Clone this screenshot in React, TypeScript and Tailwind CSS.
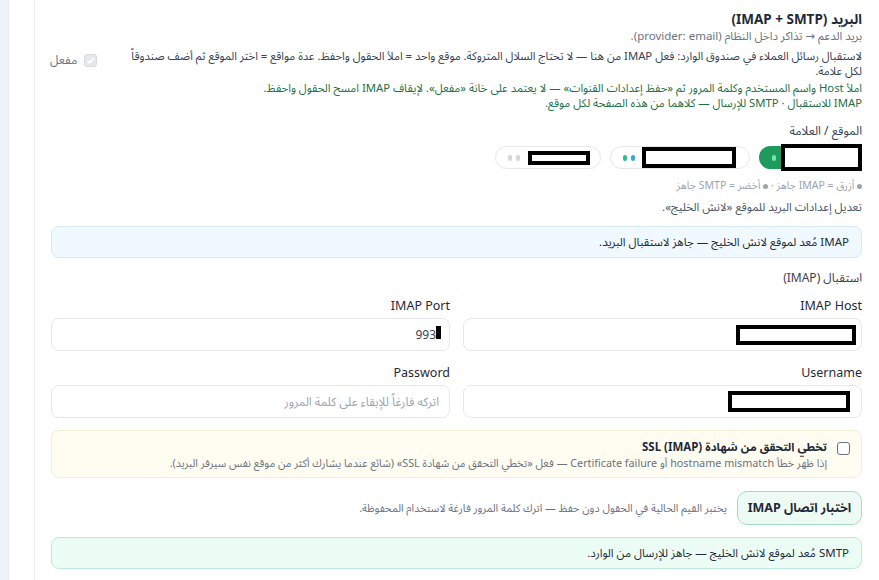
import React from "react";

const font = {
  fontFamily: '"Segoe UI", "Noto Sans", "Noto Sans Arabic", "DejaVu Sans", sans-serif',
};

function Redacted({ w, h, b = 4 }: { w: number; h: number; b?: number }) {
  return (
    <span
      className="inline-block bg-white border-black shrink-0"
      style={{ width: w, height: h, borderWidth: b }}
    />
  );
}

function Field({
  label,
  children,
  pad = "px-[10px]",
}: {
  label: string;
  children: React.ReactNode;
  pad?: string;
}) {
  return (
    <div className="flex-1 min-w-0">
      <div className="text-[12.5px] leading-[16px] text-[#1f2937]">{label}</div>
      <div className={`mt-[4px] h-[33px] rounded-lg border border-[#e5e7eb] bg-white flex items-center ${pad}`}>
        {children}
      </div>
    </div>
  );
}

function Dot({ c }: { c: string }) {
  return <span className={`inline-block w-[5px] h-[5px] rounded-full align-middle ${c}`} />;
}

export default function App() {
  return (
    <div dir="rtl" style={font} className="min-h-[580px] bg-[#eef2f9] pl-2">
      <div className="min-h-[580px] bg-white pl-[25px] border-l border-[#e4e8ef]">
        <div className="min-h-[580px] border-l border-[#ededed] pl-4 pr-[17px] pt-[10px]">
          {/* header */}
          <div className="flex items-center gap-4">
            <div className="flex-1 min-w-0">
              <div className="text-[13.5px] leading-[19px] font-bold text-[#1f2937]">البريد (IMAP + SMTP)</div>
              <div className="text-[11.5px] leading-[14px] text-[#6b7280]">
                بريد الدعم → تذاكر داخل النظام (provider: email).
              </div>
              <p className="mt-[5px] text-[11.3px] leading-[15px] text-[#374151]">
                لاستقبال رسائل العملاء في صندوق الوارد: فعل IMAP من هنا — لا تحتاج السلال المتروكة. موقع واحد = املأ الحقول واحفظ. عدة مواقع = اختر الموقع ثم أضف صندوقاً لكل علامة.
              </p>
              <p className="mt-[2px] text-[11.3px] leading-[15px] text-[#1d7048]">
                املأ Host واسم المستخدم وكلمة المرور ثم «حفظ إعدادات القنوات» — لا يعتمد على خانة «مفعل». لإيقاف IMAP امسح الحقول واحفظ.
                <br />
                IMAP للاستقبال · SMTP للإرسال — كلاهما من هذه الصفحة لكل موقع.
              </p>
            </div>
            <label className="flex items-center gap-[7px] shrink-0 text-[12px] text-[#6b7280] ml-[-1px]">
              <span className="w-[13px] h-[13px] rounded-[3px] bg-[#e5e7eb] border border-[#d8dbe0] flex items-center justify-center">
                <svg width="9" height="9" viewBox="0 0 10 10">
                  <path d="M1.5 5.2 L4 7.6 L8.6 2.4" fill="none" stroke="#ffffff" strokeWidth="1.6" />
                </svg>
              </span>
              مفعل
            </label>
          </div>

          {/* site / brand */}
          <div className="mt-[13px] text-[12px] leading-[16px] text-[#374151]">الموقع / العلامة</div>
          <div className="mt-[7px] flex items-center gap-[9px]">
            <div className="h-[23px] w-[103px] rounded-full bg-[#1e9a5d] flex items-center gap-[5px] pl-[13px]">
              <Redacted w={81} h={27} />
              <span className="w-[6px] h-[6px] rounded-full bg-[#6ee7b7]" />
            </div>
            <div className="h-[23px] w-[140px] rounded-full border border-[#e5e7eb] bg-white flex items-center gap-[4px] pr-[13px] pl-[12px]">
              <Redacted w={94} h={21} />
              <span className="mr-[3px] w-[6px] h-[6px] rounded-full bg-[#38a3e8]" />
              <span className="w-[6px] h-[6px] rounded-full bg-[#22c38e]" />
            </div>
            <div className="h-[23px] w-[106px] rounded-full border border-[#e5e7eb] bg-white flex items-center gap-[4px] pr-[10px] pl-[12px]">
              <Redacted w={62} h={14} b={4} />
              <span className="mr-[4px] w-[6px] h-[6px] rounded-full bg-[#d4d6da]" />
              <span className="w-[6px] h-[6px] rounded-full bg-[#d4d6da]" />
            </div>
          </div>
          <div className="mt-[9px] text-[10.5px] leading-[14px] text-[#9ca3af]">
            <Dot c="bg-[#9ca3af]" /> أزرق = IMAP جاهز · <Dot c="bg-[#9ca3af]" /> أخضر = SMTP جاهز
          </div>
          <div className="mt-[7px] text-[11.5px] leading-[16px] text-[#4b5563]">
            تعديل إعدادات البريد للموقع «لانش الخليج».
          </div>

          <div className="mt-[11px] h-[32px] rounded-lg border border-[#d4e9f3] bg-[#f0f9ff] flex items-center px-[12px] text-[11.5px] text-[#1f2937]">
            IMAP مُعد لموقع لانش الخليج — جاهز لاستقبال البريد.
          </div>

          <div className="mt-[12px] text-[12px] leading-[16px] text-[#374151]">استقبال (IMAP)</div>

          <div className="mt-[12px] flex gap-[13px]">
            <Field label="IMAP Host" pad="pr-[5px]">
              <Redacted w={120} h={20} />
            </Field>
            <Field label="IMAP Port" pad="pr-[8px]">
              <span className="inline-block w-[5px] h-[13px] bg-black mt-[-4px]" />
              <span className="text-[12px] text-[#374151]">993</span>
            </Field>
          </div>

          <div className="mt-[14px] flex gap-[13px]">
            <Field label="Username" pad="pr-[11px]">
              <Redacted w={122} h={21} />
            </Field>
            <Field label="Password">
              <span className="text-[12px] text-[#9ca3af]">اتركه فارغاً للإبقاء على كلمة المرور</span>
            </Field>
          </div>

          {/* ssl skip */}
          <div className="mt-[12px] h-[48px] rounded-lg border border-[#f6eed3] bg-[#fffdf1] flex items-start gap-[10px] pr-[11px] pl-3 pt-[8px]">
            <span className="mt-[3px] w-[13px] h-[13px] shrink-0 rounded-[3px] border border-[#6b7280] bg-white" />
            <div>
              <div className="text-[11.5px] leading-[16px] font-bold text-[#1f2937]">تخطي التحقق من شهادة SSL (IMAP)</div>
              <div className="text-[10.8px] leading-[16px] text-[#6b7280]">
                إذا ظهر خطأ hostname mismatch أو Certificate failure — فعل «تخطي التحقق من شهادة SSL» (شائع عندما يشارك أكثر من موقع نفس سيرفر البريد).
              </div>
            </div>
          </div>

          <div className="mt-[13px] flex items-center gap-[10px]">
            <button className="h-[34px] w-[125px] rounded-[10px] border border-[#a3dcc4] bg-[#eefbf5] text-[12.5px] font-bold text-[#1f2937]">
              اختبار اتصال IMAP
            </button>
            <span className="text-[10.8px] text-[#6b7280]">
              يختبر القيم الحالية في الحقول دون حفظ — اترك كلمة المرور فارغة لاستخدام المحفوظة.
            </span>
          </div>

          <div className="mt-[12px] h-[32px] rounded-lg border border-[#bde9d6] bg-[#ecfdf5] flex items-center px-[12px] text-[11.5px] text-[#1f2937]">
            SMTP مُعد لموقع لانش الخليج — جاهز للإرسال من الوارد.
          </div>
        </div>
      </div>
    </div>
  );
}
